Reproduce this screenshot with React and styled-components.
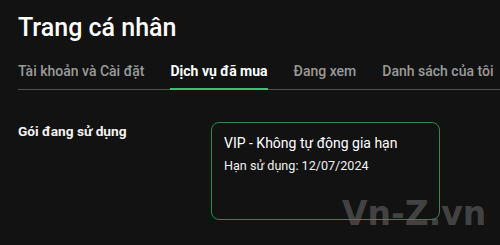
import React from "react";
import styled, { createGlobalStyle } from "styled-components";

const Global = createGlobalStyle`
  html, body {
    margin: 0;
    padding: 0;
    background: #121212;
  }
  body {
    font-family: Roboto, "Noto Sans", sans-serif;
    color: #fff;
  }
`;

const Page = styled.div`
  position: relative;
  width: 500px;
  height: 245px;
  overflow: hidden;
  background: #121212;
  padding-top: 10px;
  box-sizing: border-box;
`;

const Title = styled.h1`
  margin: 0 0 0 18px;
  font-size: 25px;
  font-weight: 500;
  line-height: 36px;
  color: #fff;
`;

const Tabs = styled.div`
  display: flex;
  gap: 26px;
  margin: 16px 0 0 18px;
  border-bottom: 1px solid #505050;
`;

const Tab = styled.div`
  font-size: 14px;
  font-weight: ${(p) => (p.$active ? 700 : 500)};
  color: ${(p) => (p.$active ? "#ffffff" : "#9a9a9a")};
  padding-bottom: 8px;
  line-height: 18px;
  white-space: nowrap;
  border-bottom: 2px solid ${(p) => (p.$active ? "#3dbf74" : "transparent")};
  margin-bottom: -1px;
`;

const Section = styled.div`
  display: flex;
  margin: 33px 0 0 18px;
`;

const Label = styled.div`
  width: 193px;
  font-size: 13.7px;
  font-weight: 700;
  line-height: 16px;
  color: #f2f2f2;
`;

const Card = styled.div`
  width: 229px;
  height: 98px;
  box-sizing: border-box;
  border: 1px solid #2b8a52;
  border-radius: 8px;
  padding: 11px 12px;
  margin-top: -1px;
`;

const Plan = styled.div`
  font-size: 14px;
  line-height: 18px;
  white-space: nowrap;
  color: #fff;
`;

const Expiry = styled.div`
  margin-top: 6px;
  font-size: 12.6px;
  line-height: 16px;
  white-space: nowrap;
  color: #f0f0f0;
`;

const Watermark = styled.div`
  position: absolute;
  left: 342px;
  top: 194px;
  font-family: "DejaVu Sans", sans-serif;
  font-weight: 700;
  font-size: 33px;
  color: rgba(110, 110, 110, 0.55);
  pointer-events: none;
`;

export default function App() {
  return (
    <Page>
      <Global />
      <Title>Trang cá nhân</Title>
      <Tabs>
        <Tab>Tài khoản và Cài đặt</Tab>
        <Tab $active>Dịch vụ đã mua</Tab>
        <Tab>Đang xem</Tab>
        <Tab>Danh sách của tôi</Tab>
      </Tabs>
      <Section>
        <Label>Gói đang sử dụng</Label>
        <Card>
          <Plan>VIP - Không tự động gia hạn</Plan>
          <Expiry>Hạn sử dụng: 12/07/2024</Expiry>
        </Card>
      </Section>
      <Watermark>Vn-Z.vn</Watermark>
    </Page>
  );
}
